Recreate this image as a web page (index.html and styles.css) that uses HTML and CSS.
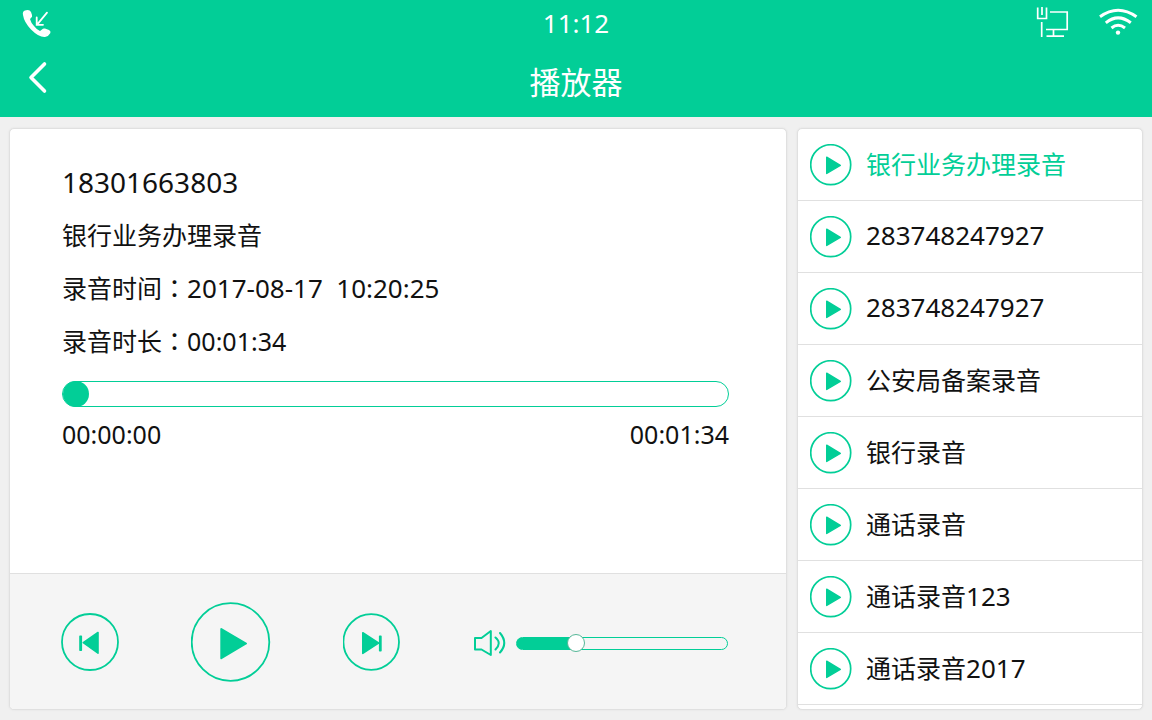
FILE: index.html
```html
<!DOCTYPE html>
<html lang="zh-CN">
<head>
<meta charset="utf-8">
<meta name="viewport" content="width=device-width, initial-scale=1">
<title>播放器</title>
<link rel="stylesheet" href="styles.css">
</head>
<body>
<svg class="defs" aria-hidden="true">
  <symbol id="play" viewBox="0 0 42 42">
    <circle cx="20.700" cy="20.700" r="20" fill="none" stroke="currentColor" stroke-width="1.700"/>
    <path d="M16.700 13.200 30.300 21.300 16.700 29.500z" fill="currentColor" stroke="currentColor" stroke-width="1.400" stroke-linejoin="round"/>
  </symbol>
</svg>
<header class="header">
  <div class="status">
    <svg class="icon-call" viewBox="21 8 30 30" aria-hidden="true">
      <path fill="currentColor" d="M23 15Q22 11 26 10.300Q29.500 9.200 31 12L32 15Q32.600 17 31 18L30 19Q31 23 34 26Q37 30 40 31L42 29.500Q43 28 45 28.500L49 30Q51 31 50.400 33Q49 36 45 37Q39 37.500 31 29.500Q24 22 23 15Z"/>
      <path fill="none" stroke="currentColor" stroke-width="1.800" stroke-linecap="round" d="M47 12.700 37.300 24.300M36.700 17.500V24.800H43"/>
    </svg>
    <time class="clock">11:12</time>
    <div class="status-right">
      <svg class="icon-net" viewBox="1036 5 34 32" aria-hidden="true">
        <path fill="none" stroke="currentColor" stroke-width="1.700" d="M1037.700 6.500V17.500H1046.500V6.500M1042 6V14M1041.700 21V36M1050 11H1067.200V28.500H1046M1053.500 28.500V35M1046.500 35.200H1064"/>
      </svg>
      <svg class="icon-wifi" viewBox="1098 8 40 29" aria-hidden="true">
        <path fill="none" stroke="currentColor" stroke-width="3" d="M1100 17.800Q1118 4.800 1136.500 17.800M1105.800 23.800Q1118 14 1130.800 23.800M1111.500 29Q1118 23.500 1125 29"/>
        <circle cx="1118" cy="33.600" r="2.200" fill="currentColor"/>
      </svg>
    </div>
  </div>
  <div class="titlebar">
    <button class="back" type="button" aria-label="返回">
      <svg viewBox="28 61 20 33" aria-hidden="true"><path fill="none" stroke="currentColor" stroke-width="3.600" stroke-linecap="round" stroke-linejoin="round" d="M44.500 64 31 77.500 44.500 91"/></svg>
    </button>
    <h1 class="title">播放器</h1>
  </div>
</header>
<main class="content">
  <section class="panel player">
    <div class="details">
      <p class="line phone">18301663803</p>
      <p class="line">银行业务办理录音</p>
      <p class="line">录音时间<span class="colon" lang="zh-TW">：</span><time class="date">2017-08-17&nbsp; 10:20:25</time></p>
      <p class="line">录音时长<span class="colon" lang="zh-TW">：</span><time>00:01:34</time></p>
      <input class="progress" type="range" min="0" max="94" value="0" aria-label="播放进度">
      <div class="times"><time>00:00:00</time><time>00:01:34</time></div>
    </div>
    <div class="controls">
      <button class="round" type="button" aria-label="上一个">
        <svg viewBox="61 613 58 58" aria-hidden="true">
          <circle cx="90" cy="642" r="28" fill="none" stroke="currentColor" stroke-width="1.800"/>
          <path fill="currentColor" stroke="currentColor" stroke-width="1.600" stroke-linejoin="round" d="M83.300 642.700 98 632.500V653.200zM80 636.300h1.300v14h-1.300z"/>
        </svg>
      </button>
      <button class="round large" type="button" aria-label="播放">
        <svg viewBox="191 602 80 80" aria-hidden="true">
          <circle cx="230.500" cy="642" r="38.800" fill="none" stroke="currentColor" stroke-width="1.800"/>
          <path fill="currentColor" stroke="currentColor" stroke-width="2" stroke-linejoin="round" d="M221.300 629 246 643.500 221.300 658.200z"/>
        </svg>
      </button>
      <button class="round" type="button" aria-label="下一个">
        <svg viewBox="343 613 58 58" aria-hidden="true">
          <circle cx="371.200" cy="642" r="27.800" fill="none" stroke="currentColor" stroke-width="1.800"/>
          <path fill="currentColor" stroke="currentColor" stroke-width="1.600" stroke-linejoin="round" d="M362.800 632.700 378.500 643 362.800 653.400zM379.700 636.300h1.200v14.400h-1.200z"/>
        </svg>
      </button>
      <label class="volume">
        <svg class="icon-volume" viewBox="473 629 33 28" role="img" aria-label="音量">
          <path fill="none" stroke="currentColor" stroke-width="2" stroke-linejoin="round" stroke-linecap="round" d="M475 638H481.500L490.800 631V655L481.500 649.500H475zM495.500 637.500Q502 643 495.500 649.500M500 633Q508.500 643 500 652.500"/>
        </svg>
        <input class="level" type="range" min="0" max="100" value="26">
      </label>
    </div>
  </section>
  <aside class="panel">
    <ul class="list">
      <li><button class="item active" type="button"><svg aria-hidden="true"><use href="#play"/></svg><span>银行业务办理录音</span></button></li>
      <li><button class="item" type="button"><svg aria-hidden="true"><use href="#play"/></svg><span class="digits">283748247927</span></button></li>
      <li><button class="item" type="button"><svg aria-hidden="true"><use href="#play"/></svg><span class="digits">283748247927</span></button></li>
      <li><button class="item" type="button"><svg aria-hidden="true"><use href="#play"/></svg><span>公安局备案录音</span></button></li>
      <li><button class="item" type="button"><svg aria-hidden="true"><use href="#play"/></svg><span>银行录音</span></button></li>
      <li><button class="item" type="button"><svg aria-hidden="true"><use href="#play"/></svg><span>通话录音</span></button></li>
      <li><button class="item" type="button"><svg aria-hidden="true"><use href="#play"/></svg><span>通话录音<span class="digits">123</span></span></button></li>
      <li><button class="item" type="button"><svg aria-hidden="true"><use href="#play"/></svg><span>通话录音<span class="digits">2017</span></span></button></li>
    </ul>
  </aside>
</main>
</body>
</html>
```
FILE: styles.css
```css
:root {
  --green: #02ce97;
  --line: #e0e0e0;
}

* { box-sizing: border-box; }

body {
  margin: 0;
  min-height: 100vh;
  display: flex;
  flex-direction: column;
  background: #f0f0f0;
  color: #111;
  font-family: "Noto Sans", "Noto Sans CJK SC", sans-serif;
  font-size: 25px;
}

h1, p, ul { margin: 0; padding: 0; font-weight: 400; }
ul { list-style: none; }
svg { display: block; flex: none; }

button {
  padding: 0;
  border: 0;
  background: none;
  color: var(--green);
  font: inherit;
  cursor: pointer;
}

.defs { position: absolute; width: 0; height: 0; }

.header { background: var(--green); color: #fff; }

.status, .titlebar {
  display: grid;
  grid-template-columns: 1fr auto 1fr;
  align-items: center;
}

.status { height: 46px; padding: 0 14px; }
.titlebar { height: 71px; padding: 0 28px; }

.icon-call { width: 30px; height: 30px; margin-left: 7px; }
.clock { font-size: 26px; }
.status-right { display: flex; justify-content: flex-end; align-items: center; gap: 28px; padding-bottom: 3px; }
.icon-net { width: 34px; height: 32px; }
.icon-wifi { width: 40px; height: 29px; }

.back { justify-self: start; padding-bottom: 8px; color: #fff; }
.back svg { width: 20px; height: 33px; }
.title { font-size: 31px; line-height: 40px; }

.content {
  flex: 1;
  display: grid;
  grid-template-columns: 778fr 346fr;
  gap: 10px;
  padding: 11px 9px 10px;
}

.panel {
  min-width: 0;
  overflow: hidden;
  background: #fff;
  border: 1px solid var(--line);
  border-radius: 5px;
  box-shadow: 0 0 2px #ddd;
}

.player { display: flex; flex-direction: column; }
.details { flex: 1; padding: 27px 57px 0 52px; }
.line { line-height: 53px; }
.phone { font-size: 28px; }
.date { font-size: 26px; line-height: 1; }
.colon { font-family: "Noto Sans CJK TC", sans-serif; line-height: 1; }

input[type="range"] {
  appearance: none;
  display: block;
  width: 100%;
  margin: 0;
  border: 1px solid var(--green);
  cursor: pointer;
}

.progress { height: 26px; border-radius: 13px; background: #fff; }
input.progress { margin-top: 13px; }
.progress::-webkit-slider-thumb {
  appearance: none;
  width: 26px;
  height: 26px;
  border-radius: 50%;
  background: var(--green);
}

.times { display: flex; justify-content: space-between; margin-top: 9px; line-height: 36px; }

.controls {
  display: flex;
  align-items: center;
  gap: 72px;
  height: 136px;
  padding: 0 58px 0 51px;
  background: #f5f5f5;
  border-top: 1px solid var(--line);
}

.round svg { width: 58px; height: 58px; }
.large svg { width: 80px; height: 80px; }

.volume { flex: 1; display: flex; align-items: center; gap: 10px; min-width: 0; padding-top: 3px; color: var(--green); }
.icon-volume { width: 33px; height: 28px; }
.level {
  flex: 1;
  min-width: 0;
  height: 13px;
  border-radius: 7px;
  background: linear-gradient(to right, var(--green) 28%, transparent 28%);
}
.level::-webkit-slider-thumb {
  appearance: none;
  width: 18px;
  height: 18px;
  border: 1px solid #55b797;
  border-radius: 50%;
  background: #fff;
}

.item {
  display: flex;
  align-items: center;
  gap: 14px;
  width: 100%;
  height: 72px;
  padding: 0 12px;
  border-bottom: 1px solid var(--line);
  text-align: left;
  white-space: nowrap;
}
.item svg { width: 42px; height: 42px; }
.item > span { padding-bottom: 3px; color: #111; }
.item.active > span { color: var(--green); }
.digits { font-size: 26px; }
```
